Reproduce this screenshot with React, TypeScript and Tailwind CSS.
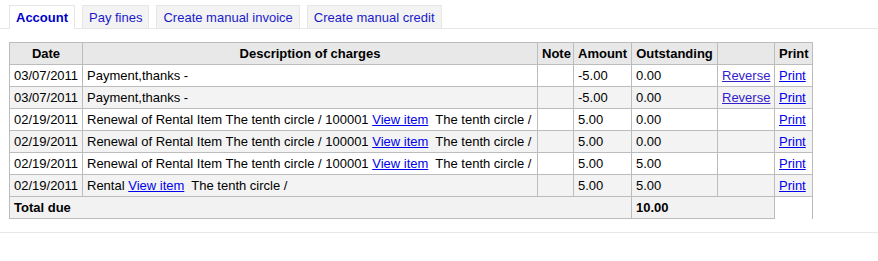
const rows = [
    { date: "03/07/2011", desc: "payment", amount: "-5.00", out: "0.00", reverse: true },
    { date: "03/07/2011", desc: "payment", amount: "-5.00", out: "0.00", reverse: true },
    { date: "02/19/2011", desc: "renewal", amount: "5.00", out: "0.00", reverse: false },
    { date: "02/19/2011", desc: "renewal", amount: "5.00", out: "0.00", reverse: false },
    { date: "02/19/2011", desc: "renewal", amount: "5.00", out: "5.00", reverse: false },
    { date: "02/19/2011", desc: "rental", amount: "5.00", out: "5.00", reverse: false },
];

const tabs = ["Account", "Pay fines", "Create manual invoice", "Create manual credit"];

const Description = ({ kind }: { kind: string }) => {
    if (kind === "payment") return <>Payment,thanks -</>;
    const link = <a href="#" className="text-[#0000ee] underline">View item</a>;
    if (kind === "renewal")
        return (
            <>
                Renewal of Rental Item The tenth circle / 100001 {link}&nbsp; The tenth circle /
            </>
        );
    return <>Rental {link}&nbsp; The tenth circle /</>;
};

const th = "border border-[#bcbcbc] bg-[#e8e8e8] px-1 h-[22px] font-bold text-center";
const td = "border border-[#bcbcbc] px-1 h-[22px] text-left";

export default function App() {
    return (
        <div className="w-[878px] h-[261px] bg-white text-[13px] leading-[15px] text-black font-['Liberation_Sans',Arial,sans-serif]">
            {/* Tabs */}
            <div className="flex gap-[7px] pl-[9px] pt-[5px] border-b border-[#e6e6e6]">
                {tabs.map((t, i) => (
                    <a
                        key={t}
                        href="#"
                        className={
                            i === 0
                                ? "-mb-px flex h-[24px] items-center border border-b-0 border-[#e6e6e6] bg-white px-[6px] font-bold text-[#0000cc]"
                                : "flex h-[23px] items-center border border-b-0 border-[#e6e6e6] bg-[#f3f3f3] px-[6px] text-[#1a1acc]"
                        }
                    >
                        {t}
                    </a>
                ))}
            </div>

            {/* Account table */}
            <div className="pl-[9px] pt-[13px] pb-[13px] border-b border-[#e8e8e8]">
                <table className="table-fixed border-collapse border-r border-[#bcbcbc] w-[804px]">
                    <colgroup>
                        <col className="w-[73px]" />
                        <col className="w-[455px]" />
                        <col className="w-[36px]" />
                        <col className="w-[58px]" />
                        <col className="w-[86px]" />
                        <col className="w-[57px]" />
                        <col className="w-[38px]" />
                    </colgroup>
                    <thead>
                        <tr>
                            <th className={th}>Date</th>
                            <th className={th}>Description of charges</th>
                            <th className={th}>Note</th>
                            <th className={th}>Amount</th>
                            <th className={th}>Outstanding</th>
                            <th className={th}></th>
                            <th className={th}>Print</th>
                        </tr>
                    </thead>
                    <tbody>
                        {rows.map((r, i) => (
                            <tr key={i} className={i % 2 === 1 ? "bg-[#f3f3f3]" : "bg-white"}>
                                <td className={td}>{r.date}</td>
                                <td className={`${td} whitespace-nowrap`}>
                                    <Description kind={r.desc} />
                                </td>
                                <td className={td}></td>
                                <td className={td}>{r.amount}</td>
                                <td className={td}>{r.out}</td>
                                <td className={`${td} text-center`}>
                                    {r.reverse && <a href="#" className="text-[#3322cc] underline">Reverse</a>}
                                </td>
                                <td className={td}>
                                    <a href="#" className="text-[#0000ee] underline">Print</a>
                                </td>
                            </tr>
                        ))}
                        <tr>
                            <td colSpan={4} className={`${td} bg-[#f2f2f2] font-bold`}>Total due</td>
                            <td colSpan={2} className={`${td} bg-[#f2f2f2] font-bold`}>10.00</td>
                        </tr>
                    </tbody>
                </table>
            </div>
        </div>
    );
}
